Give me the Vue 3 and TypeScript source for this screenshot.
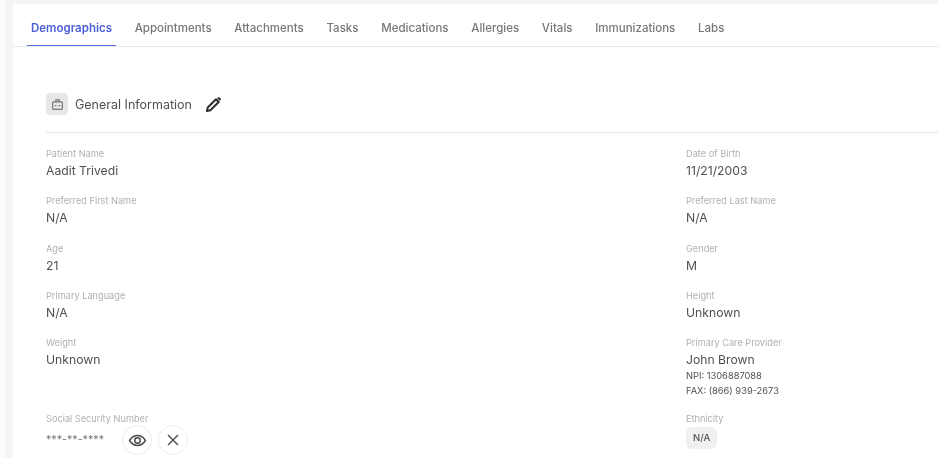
<script setup lang="ts">
const tabs: string[] = ['Demographics','Appointments','Attachments','Tasks','Medications','Allergies','Vitals','Immunizations','Labs']
interface Field { label: string; value: string }
const rows: [Field, Field][] = [
  [{label:'Patient Name',value:'Aadit Trivedi'},{label:'Date of Birth',value:'11/21/2003'}],
  [{label:'Preferred First Name',value:'N/A'},{label:'Preferred Last Name',value:'N/A'}],
  [{label:'Age',value:'21'},{label:'Gender',value:'M'}],
  [{label:'Primary Language',value:'N/A'},{label:'Height',value:'Unknown'}],
]
</script>

<template>
  <div class="page">
    <main class="card">
      <nav class="tabs">
        <a v-for="(t,i) in tabs" :key="t" class="tab" :class="{active:i===0}">{{ t }}</a>
      </nav>
      <section class="content">
        <header class="head">
          <span class="badge">
            <svg width="13" height="13" viewBox="0 0 12 12" fill="none" stroke="#777" stroke-width="1.100"><rect x="1.500" y="3.500" width="9" height="7" rx="1"/><path d="M4.500 3.500V1.800h3v1.700M3.500 7h1.500M7 7h1.500"/></svg>
          </span>
          <h2>General Information</h2>
          <svg class="pencil" width="17" height="17" viewBox="0 0 16 16"><path d="M1.800 14.200l.8-3.300L10.400 3.100l2.500 2.500-7.800 7.800z" fill="none" stroke="#2e2e2e" stroke-width="1.900" stroke-linejoin="round"/><path d="M11.500 2l.7-.7a1 1 0 0 1 1.400 0l1.100 1.100a1 1 0 0 1 0 1.400l-.7.700z" fill="#2e2e2e"/></svg>
        </header>
        <div class="grid">
          <template v-for="(r,i) in rows" :key="i">
            <div v-for="f in r" :key="f.label" class="field">
              <label>{{ f.label }}</label>
              <p>{{ f.value }}</p>
            </div>
          </template>
          <div class="field">
            <label>Weight</label>
            <p>Unknown</p>
          </div>
          <div class="field">
            <label>Primary Care Provider</label>
            <p>John Brown</p>
            <small>NPI: 1306887088</small>
            <small>FAX: (866) 939-2673</small>
          </div>
          <div class="field">
            <label>Social Security Number</label>
            <div class="ssn">
              <span>***-**-****</span>
              <button class="round" type="button" aria-label="Show">
                <svg width="19" height="19" viewBox="0 0 18 18" fill="none" stroke="#4a4a4a" stroke-width="1.400"><path d="M1.500 9C3.500 5.800 6 4.300 9 4.300S14.500 5.800 16.500 9C14.500 12.200 12 13.700 9 13.700S3.500 12.200 1.500 9z"/><circle cx="9" cy="9" r="2.600"/></svg>
              </button>
              <button class="round" type="button" aria-label="Hide">
                <svg width="14" height="14" viewBox="0 0 14 14" fill="none" stroke="#555" stroke-width="1.500"><path d="M2 2l10 10M12 2L2 12"/></svg>
              </button>
            </div>
          </div>
          <div class="field">
            <label>Ethnicity</label>
            <span class="chip">N/A</span>
          </div>
        </div>
      </section>
    </main>
  </div>
</template>

<style>
html, body { margin: 0; background: #f3f5f5; overflow: hidden; }
</style>

<style scoped>
.page {
  width: 938px;
  height: 458px;
  box-sizing: border-box;
  padding: 4px 0 0 13px;
  overflow: hidden;
  font-family: Inter, "Noto Sans", sans-serif;
  background: linear-gradient(90deg, #fbfcfc 0 6px, #f3f5f5 6px);
}
.card { background: #fff; height: 100%; filter: blur(0.4px); }
.tabs {
  display: flex;
  gap: 14.700px;
  height: 42px;
  padding-left: 14px;
  border-bottom: 1px solid #e8eaea;
}
.tab {
  box-sizing: border-box;
  height: 42px;
  padding: 17px 4px 0;
  font-size: 11.500px;
  line-height: 14px;
  font-weight: 500;
  color: #777;
  white-space: nowrap;
}
.tab.active {
  color: #4a5fd8;
  font-weight: 600;
  border-bottom: 1px solid #5a6fe0;
}
.content { padding: 46px 0 0 33px; }
.head {
  display: flex;
  align-items: center;
  height: 22px;
  padding-bottom: 17px;
  border-bottom: 1px solid #e6e8e8;
}
.badge {
  width: 22px;
  height: 22px;
  display: flex;
  align-items: center;
  justify-content: center;
  border-radius: 4px;
  background: #e6e7e7;
}
h2 {
  margin: 0 13px 0 7px;
  font-size: 12.500px;
  font-weight: 400;
  color: #505050;
}
.grid {
  display: grid;
  grid-template-columns: 640px 1fr;
  row-gap: 15.250px;
  padding-top: 15px;
}
.field { display: flex; flex-direction: column; min-width: 0; }
label {
  font-size: 9.200px;
  line-height: 12px;
  color: #b0b0b0;
}
p {
  margin: 2px 0 0;
  font-size: 12.200px;
  line-height: 18px;
  color: #505050;
}
small {
  font-size: 9.300px;
  line-height: 14.500px;
  color: #505050;
}
.ssn {
  display: flex;
  align-items: center;
  gap: 6px;
  font-size: 10.700px;
  color: #777;
}
.ssn span { width: 70px; margin-bottom: 2px; }
.round {
  width: 30px;
  height: 30px;
  padding: 0;
  display: flex;
  align-items: center;
  justify-content: center;
  border: 1px solid #eceeee;
  border-radius: 50%;
  background: #fff;
}
.chip {
  align-self: flex-start;
  margin-top: 2px;
  padding: 0 7px;
  height: 22px;
  line-height: 22px;
  border-radius: 6px;
  background: #eff1f1;
  font-size: 9.500px;
  font-weight: 500;
  color: #505050;
}
</style>
